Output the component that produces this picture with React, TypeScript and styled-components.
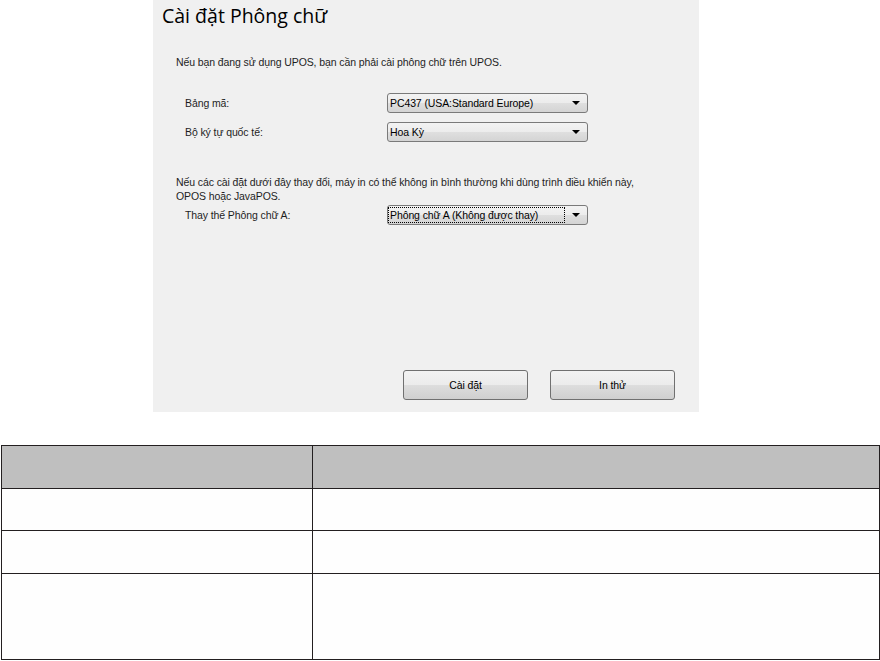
import styled, { createGlobalStyle } from 'styled-components';

const GlobalStyle = createGlobalStyle`
  html, body {
    margin: 0;
    padding: 0;
    background: #ffffff;
  }
  * {
    box-sizing: border-box;
  }
`;

type SelectProps = { focused?: boolean };

function Combo({ value, focused }: { value: string; focused?: boolean }) {
  return (
    <Select>
      <SelectValue focused={focused}>{value}</SelectValue>
      <Arrow />
    </Select>
  );
}

function App() {
  return (
    <Page>
      <GlobalStyle />

      {/* dialog capture */}
      <Panel>
        <Title>Cài đặt Phông chữ</Title>
        <Note>Nếu bạn đang sử dụng UPOS, bạn cần phải cài phông chữ trên UPOS.</Note>

        <Form>
          <Label>Bảng mã:</Label>
          <Combo value="PC437 (USA:Standard Europe)" />
          <Label>Bộ ký tự quốc tế:</Label>
          <Combo value="Hoa Kỳ" />
        </Form>

        <Note second>
          Nếu các cài đặt dưới đây thay đổi, máy in có thể không in bình thường khi dùng trình điều khiển này,
          <br />
          OPOS hoặc JavaPOS.
        </Note>

        <Form tight>
          <Label>Thay thế Phông chữ A:</Label>
          <Combo value="Phông chữ A (Không được thay)" focused />
        </Form>

        <Buttons>
          <Button>Cài đặt</Button>
          <Button>In thử</Button>
        </Buttons>
      </Panel>

      {/* empty table */}
      <Table>
        <thead>
          <tr>
            <HeadCell first />
            <HeadCell />
          </tr>
        </thead>
        <tbody>
          <tr>
            <Cell first h={42} />
            <Cell h={42} />
          </tr>
          <tr>
            <Cell first h={43} />
            <Cell h={43} />
          </tr>
          <tr>
            <Cell first h={86} />
            <Cell h={86} />
          </tr>
        </tbody>
      </Table>
    </Page>
  );
}

export default App;

const Page = styled.div`
  width: 880px;
  display: flex;
  flex-direction: column;
`;

const Panel = styled.div`
  width: 546px;
  height: 412px;
  margin-left: 153px;
  background: #f0f0f0;
  padding: 3px 0 0 9px;
  display: flex;
  flex-direction: column;
  font-family: 'Liberation Sans', Tahoma, sans-serif;
  font-size: 10.5px;
  letter-spacing: -0.1px;
  color: #1e1e1e;
`;

const Title = styled.h1`
  margin: 0;
  font-family: 'Open Sans', 'Noto Sans', sans-serif;
  font-weight: 400;
  font-size: 19.5px;
  letter-spacing: 0;
  line-height: 26px;
  color: #000;
`;

const Note = styled.p<{ second?: boolean }>`
  margin: ${(p) => (p.second ? '33px 0 0 14px' : '26px 0 0 14px')};
  line-height: 14px;
  white-space: nowrap;
`;

const Form = styled.div<{ tight?: boolean }>`
  display: grid;
  grid-template-columns: 202px 201px;
  row-gap: 9px;
  align-items: center;
  margin: ${(p) => (p.tight ? '2px 0 0 23px' : '24px 0 0 23px')};
`;

const Label = styled.span`
  line-height: 14px;
`;

const Select = styled.div`
  height: 20px;
  border: 1px solid #7a7a7a;
  border-radius: 3px;
  background: linear-gradient(#f3f3f3 0%, #ececec 50%, #dfdfdf 51%, #d4d4d4 100%);
  display: flex;
  align-items: center;
  padding: 0 7px 0 1px;
  color: #000;
`;

const SelectValue = styled.span<SelectProps>`
  flex: 1;
  line-height: 14px;
  padding: 0 1px;
  white-space: nowrap;
  margin-right: 8px;
  outline: ${(p) => (p.focused ? '1px dotted #000' : 'none')};
`;

const Arrow = styled.span`
  width: 0;
  height: 0;
  border-left: 4px solid transparent;
  border-right: 4px solid transparent;
  border-top: 4px solid #000;
`;

const Buttons = styled.div`
  display: flex;
  gap: 22px;
  margin: auto 0 12px 241px;
`;

const Button = styled.button`
  width: 125px;
  height: 30px;
  border: 1px solid #707070;
  border-radius: 3px;
  background: linear-gradient(#f2f2f2 0%, #ebebeb 50%, #dddddd 51%, #cfcfcf 100%);
  font-family: 'Liberation Sans', Tahoma, sans-serif;
  font-size: 10.5px;
  letter-spacing: -0.1px;
  color: #000;
  padding: 0;
`;

const Table = styled.table`
  margin: 33px 0 0 1px;
  width: 879px;
  border-collapse: collapse;
`;

const HeadCell = styled.th<{ first?: boolean }>`
  width: ${(p) => (p.first ? '311px' : 'auto')};
  height: 43px;
  padding: 0;
  background: #bfbfbf;
  border: 1.5px solid #231f20;
`;

const Cell = styled.td<{ first?: boolean; h: number }>`
  width: ${(p) => (p.first ? '311px' : 'auto')};
  height: ${(p) => p.h}px;
  padding: 0;
  background: #fefefe;
  border: 1.5px solid #231f20;
`;
